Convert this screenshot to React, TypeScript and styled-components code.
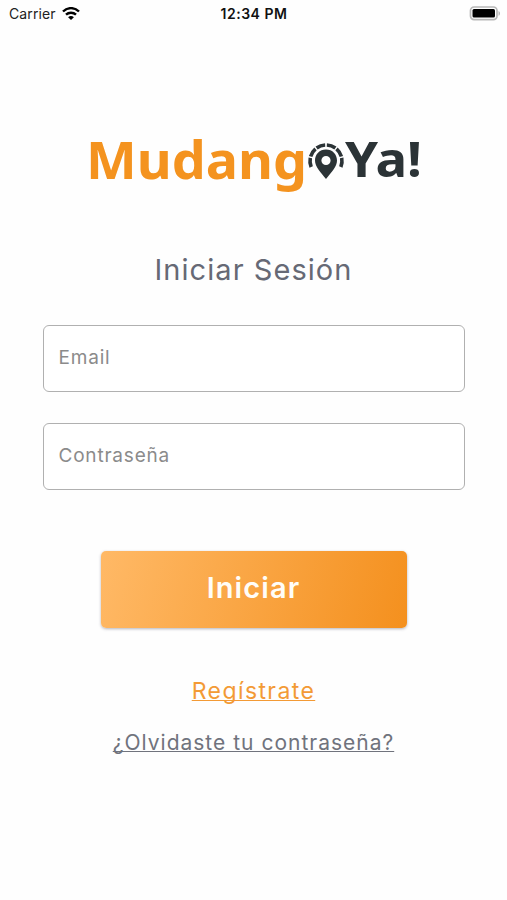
import React from 'react';
import styled, { createGlobalStyle } from 'styled-components';

const GlobalStyle = createGlobalStyle`
  *, *::before, *::after { box-sizing: border-box; }
  body { margin: 0; background: #fefefe; }
`;

const Screen = styled.main`
  display: flex;
  flex-direction: column;
  height: 900px;
  width: 507px;
  overflow: hidden;
  background: #fefefe;
  font-family: Inter, 'Liberation Sans', sans-serif;
`;

const StatusBar = styled.header`
  display: grid;
  grid-template-columns: 1fr auto 1fr;
  align-items: center;
  height: 28px;
  padding: 0 6px 0 9px;
  color: #111;
  font-size: 14px;
  line-height: 28px;
`;

const Carrier = styled.div`
  display: flex;
  align-items: center;
  gap: 6px;
  letter-spacing: 0.1px;
  color: #222;
`;

const Clock = styled.time`
  padding-right: 2px;
  font-weight: 600;
  letter-spacing: 0.5px;
`;

const BatterySlot = styled.div`
  display: flex;
  justify-content: flex-end;
`;

const Content = styled.section`
  display: flex;
  flex-direction: column;
  align-items: center;
`;

const Logo = styled.svg`
  display: block;
  width: 340px;
  height: 100px;
  margin-top: 87px;
`;

const LogoText = styled.text`
  font-family: 'Noto Sans', sans-serif;
  font-weight: 700;
`;

const Title = styled.h1`
  margin: 35px 0 0;
  height: 40px;
  color: #666975;
  font-size: 29px;
  font-weight: 400;
  line-height: 40px;
  letter-spacing: 1.05px;
`;

const Form = styled.form`
  display: flex;
  flex-direction: column;
  align-items: center;
  margin-top: 35px;
`;

const Field = styled.input`
  width: 422px;
  height: 67px;
  margin-bottom: 31px;
  padding: 0 15px 2px;
  border: 1.5px solid #b0b0b0;
  border-radius: 6px;
  outline: none;
  background: #fff;
  font-family: inherit;
  font-size: 19px;
  letter-spacing: 0.8px;
  &::placeholder { color: #8b8b8b; opacity: 1; }
`;

const Submit = styled.button`
  width: 306px;
  height: 77px;
  margin-top: 30px;
  padding: 0 0 4px;
  border: 0;
  border-radius: 5px;
  background: linear-gradient(105deg, #ffb966 0%, #f4901e 100%);
  box-shadow: 0 1px 3px rgba(70, 70, 90, 0.4);
  color: #fffdf8;
  font-family: inherit;
  font-size: 29px;
  font-weight: 600;
  letter-spacing: 1.1px;
`;

const Links = styled.nav`
  display: flex;
  flex-direction: column;
  align-items: center;
  margin-top: 47px;
  gap: 20px;
`;

const TextLink = styled.a<{ $accent?: boolean }>`
  color: ${(p) => (p.$accent ? '#f39a35' : '#70737d')};
  font-size: ${(p) => (p.$accent ? '23px' : '21px')};
  font-weight: 400;
  line-height: 32px;
  letter-spacing: ${(p) => (p.$accent ? '1.4px' : '1px')};
  text-decoration: underline;
  text-decoration-thickness: 1px;
  text-underline-offset: 1px;
  text-decoration-skip-ink: none;
`;

const WifiIcon = () => (
  <svg width="18" height="14" viewBox="0 0 18 14" fill="none" stroke="#000" strokeWidth="2.4">
    <path d="M1 4.500C5.500 0 12.500 0 17 4.500" />
    <path d="M4 7.700c2.800-2.700 7.200-2.700 10 0" />
    <path d="M9 13 6.100 10.200c1.700-1.500 4.100-1.500 5.800 0Z" fill="#000" stroke="none" />
  </svg>
);

const BatteryIcon = () => (
  <svg width="32" height="18" viewBox="0 0 32 18">
    <rect x="1.500" y="2" width="26.500" height="12.600" rx="3.600" fill="#fff" stroke="#b8b8b8" strokeWidth="1.700" />
    <rect x="3.500" y="4" width="22.500" height="8.600" rx="1.500" />
    <path d="M29.500 5.900c2 .8 2 4 0 4.800Z" fill="#b8b8b8" />
  </svg>
);

const RING_CENTER = { x: 326, y: 161 };
const RING_RADIUS = 16;
const SEGMENT_STARTS = [-112, -74, -36, 3, 41, 79];
const SEGMENT_SWEEP = 33;

const ringPoint = (degrees: number) => {
  const angle = (degrees * Math.PI) / 180;
  return `${RING_CENTER.x + RING_RADIUS * Math.sin(angle)} ${RING_CENTER.y - RING_RADIUS * Math.cos(angle)}`;
};

const ringPath = SEGMENT_STARTS.map(
  (start) => `M${ringPoint(start)}A${RING_RADIUS} ${RING_RADIUS} 0 0 1 ${ringPoint(start + SEGMENT_SWEEP)}`,
).join('');

const Brand = () => (
  <Logo viewBox="84 115 340 100" role="img" aria-label="MudangoYa!">
    <LogoText x="86" y="179" fontSize="52" fill="#f4931f" textLength="221" lengthAdjust="spacingAndGlyphs">Mudang</LogoText>
    <LogoText x="345" y="177" fontSize="48" fill="#2b3336" textLength="77" lengthAdjust="spacingAndGlyphs">Ya!</LogoText>
    <path d={ringPath} fill="none" stroke="#2b3336" strokeWidth="3.600" />
    <path
      fill="#2b3336"
      fillRule="evenodd"
      d="M326 149.500c-6.500 0-11 4.800-11 11 0 6.500 5.500 11.300 11 18.500 5.500-7.200 11-12 11-18.500 0-6.200-4.500-11-11-11Zm0 6.400a4.600 4.600 0 1 1 0 9.200 4.600 4.600 0 0 1 0-9.200Z"
    />
  </Logo>
);

export default function App() {
  return (
    <Screen>
      <GlobalStyle />
      <StatusBar>
        <Carrier>Carrier <WifiIcon /></Carrier>
        <Clock>12:34 PM</Clock>
        <BatterySlot><BatteryIcon /></BatterySlot>
      </StatusBar>
      <Content>
        <Brand />
        <Title>Iniciar Sesión</Title>
        <Form onSubmit={(e) => e.preventDefault()}>
          <Field type="email" placeholder="Email" />
          <Field type="password" placeholder="Contraseña" />
          <Submit type="submit">Iniciar</Submit>
        </Form>
        <Links>
          <TextLink href="#" $accent>Regístrate</TextLink>
          <TextLink href="#">¿Olvidaste tu contraseña?</TextLink>
        </Links>
      </Content>
    </Screen>
  );
}
